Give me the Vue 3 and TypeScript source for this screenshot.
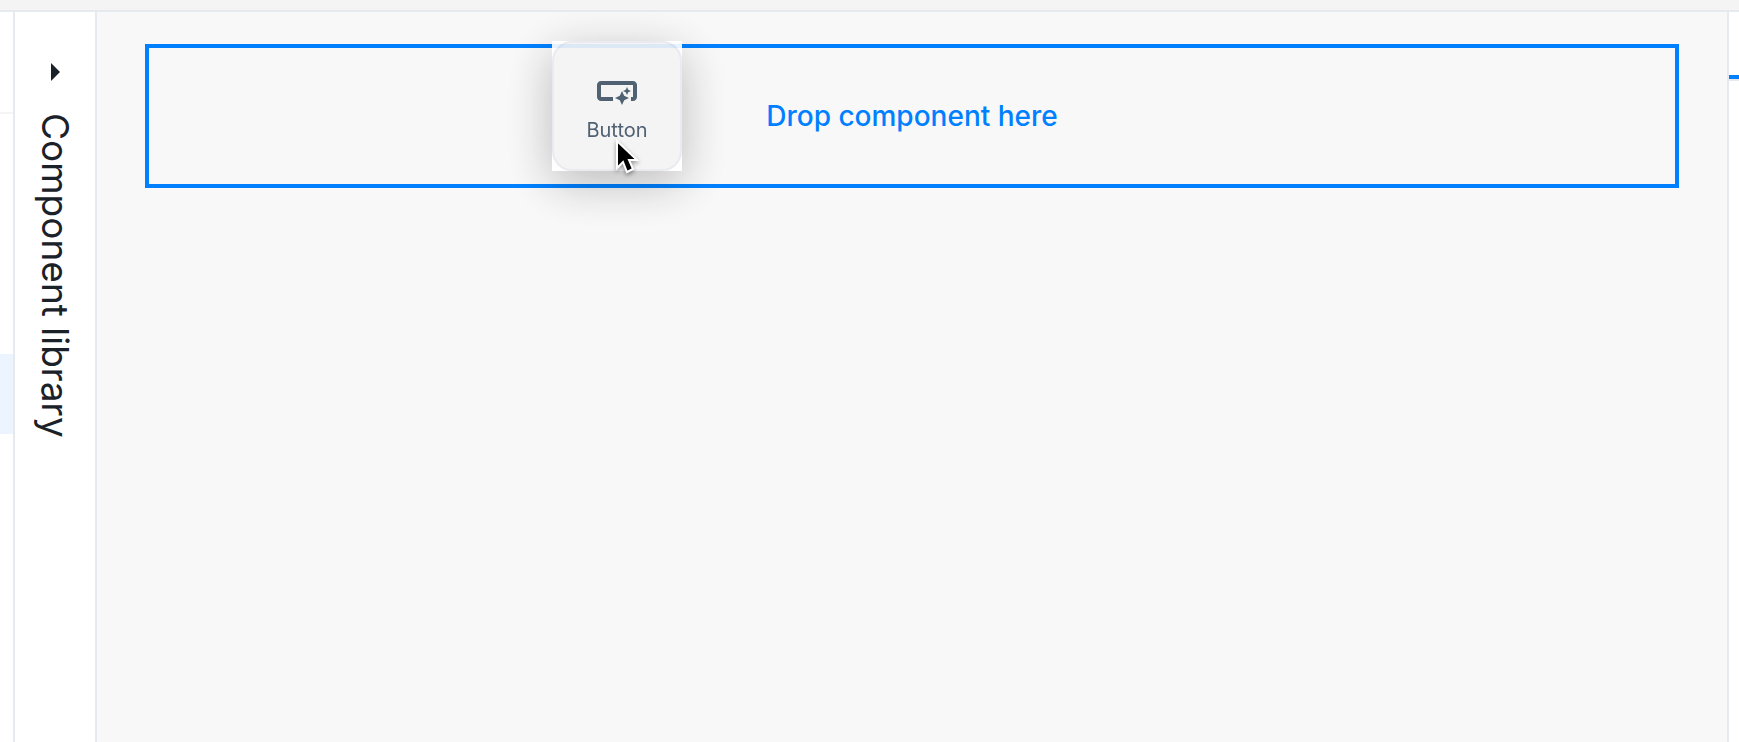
<script setup lang="ts">
interface DraggedComponent {
  label: string
  icon: string
}

const dragged: DraggedComponent = {
  label: 'Button',
  icon: 'M22 9v6c0 1.1-.9 2-2 2h-1v-2h1V9H4v6h6v2H4c-1.1 0-2-.9-2-2V9c0-1.1.9-2 2-2h16c1.1 0 2 .9 2 2zm-7.5 10l1.09-2.41L18 15.5l-2.41-1.09L14.5 12l-1.09 2.41L11 15.5l2.41 1.09L14.5 19zm2.5-5l.62-1.38L19 12l-1.38-.62L17 10l-.62 1.38L15 12l1.38.62L17 14z',
}
</script>

<template>
  <div class="editor">
    <header class="topbar"></header>
    <div class="workspace">
      <nav class="tree">
        <div class="tree-head"></div>
        <div class="tree-selected"></div>
      </nav>
      <aside class="library">
        <button class="library-toggle" type="button" aria-expanded="false">
          <svg class="arrow" viewBox="0 0 9 18" aria-hidden="true"><path d="M0 0l9 9-9 9z" /></svg>
          <span class="library-title">Component library</span>
        </button>
      </aside>
      <main class="canvas">
        <section class="dropzone">
          <p class="drop-label">Drop component here</p>
          <div class="ghost">
            <div class="ghost-image">
              <div class="tile">
                <svg class="tile-icon" viewBox="0 0 24 24" aria-hidden="true"><path :d="dragged.icon" /></svg>
                <span class="tile-label">{{ dragged.label }}</span>
              </div>
            </div>
            <svg class="cursor" viewBox="0 0 24 36" aria-hidden="true">
              <path d="M2 2v27l6-6 4 10 6-3-4-9h8z" />
            </svg>
          </div>
        </section>
      </main>
      <aside class="inspector">
        <div class="inspector-tab"></div>
      </aside>
    </div>
  </div>
</template>

<style>
body {
  margin: 0;
}
</style>

<style scoped>
.editor {
  --line: #e6e9ed;
  --blue: #0080ff;
  display: flex;
  flex-direction: column;
  min-height: 100vh;
  overflow: hidden;
  font-family: Inter, "Liberation Sans", sans-serif;
  background: #f8f8f8;
}
.topbar {
  height: 10px;
  background: #f4f4f4;
  border-bottom: 2px solid var(--line);
}
.workspace {
  flex: 1;
  display: flex;
}
.tree {
  width: 13px;
  background: #fff;
  border-right: 2px solid var(--line);
}
.tree-head {
  height: 100px;
  border-bottom: 2px solid #f4f4f4;
}
.tree-selected {
  height: 80px;
  margin-top: 240px;
  background: #ebf4ff;
}
.library {
  width: 80px;
  background: #fff;
  border-right: 2px solid var(--line);
}
.library-toggle {
  display: flex;
  flex-direction: column;
  align-items: center;
  gap: 32px;
  width: 100%;
  padding: 51px 0 0;
  border: 0;
  background: none;
  color: #1b2129;
  font: inherit;
  cursor: pointer;
}
.arrow {
  width: 9px;
  height: 18px;
  fill: currentColor;
}
.library-title {
  writing-mode: vertical-rl;
  font-size: 37px;
  line-height: 48px;
  white-space: nowrap;
}
.canvas {
  flex: 1;
  padding: 32px 48px;
}
.dropzone {
  position: relative;
  display: flex;
  align-items: center;
  justify-content: center;
  min-height: 136px;
  border: 4px solid var(--blue);
}
.drop-label {
  margin: 0;
  color: var(--blue);
  font-size: 28px;
  font-weight: 500;
  line-height: 40px;
}
.ghost {
  position: absolute;
  top: -7px;
  left: 403px;
}
.ghost-image {
  background: #fff;
  box-shadow: 0 12px 48px rgba(0, 0, 0, 0.28);
  opacity: 0.9;
}
.tile {
  box-sizing: border-box;
  display: flex;
  flex-direction: column;
  align-items: center;
  gap: 4px;
  width: 130px;
  height: 130px;
  padding-top: 24px;
  border: 2px solid #e8eaf0;
  border-radius: 20px;
  background: #f4f4f4;
  color: #3d5164;
}
.tile-icon {
  width: 48px;
  height: 48px;
  fill: currentColor;
}
.tile-label {
  font-size: 20px;
  line-height: 22px;
}
.cursor {
  position: absolute;
  top: 98px;
  left: 63px;
  width: 24px;
  height: 36px;
  overflow: visible;
  fill: #000;
  stroke: #fff;
  stroke-width: 2;
  filter: drop-shadow(0 2px 2px rgba(0, 0, 0, 0.4));
}
.inspector {
  width: 10px;
  background: #fff;
  border-left: 2px solid var(--line);
}
.inspector-tab {
  height: 63px;
  border-bottom: 2px solid var(--line);
  background: linear-gradient(var(--blue), var(--blue)) bottom / 100% 4px no-repeat;
  background-origin: padding-box;
  padding-bottom: 4px;
}
</style>
